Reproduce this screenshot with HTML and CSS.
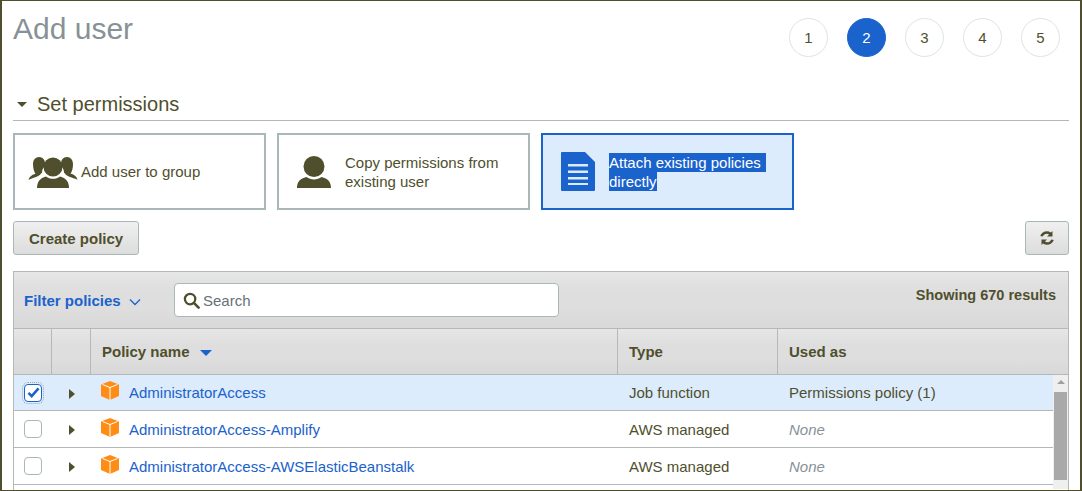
FILE: index.html
```html
<!DOCTYPE html>
<html lang="en">
<head>
    <meta charset="UTF-8">
    <meta name="viewport" content="width=device-width, initial-scale=1.0">
    <title>Add user</title>
    <link rel="stylesheet" href="styles.css">
</head>
<body>
    <div class="page">
        <header class="top">
            <h1>Add user</h1>
            <ol class="steps">
                <li>1</li>
                <li class="current">2</li>
                <li>3</li>
                <li>4</li>
                <li>5</li>
            </ol>
        </header>

        <h2 class="section"><span class="caret-down"></span>Set permissions</h2>

        <div class="cards">
            <div class="card">
                <svg class="icon-group" viewBox="0 0 50 32" width="50" height="32">
                    <path class="dark" d="M11 1c4 0 6 3 6 6.500 0 1.200-.2 2.300-.7 3.300-1.500 1.700-2.300 3.700-2.300 6l-1 .7C11 21 6 21 .5 24c.5-3 3-5 7-6.300C6 16 5 12 5 8c0-4 2.500-7 6-7z"/>
                    <path class="dark" d="M39 1c-4 0-6 3-6 6.500 0 1.200.2 2.300.7 3.300 1.500 1.700 2.300 3.700 2.300 6l1 .7c2 3.500 7 3.500 12.500 6.300-.5-3-3-5-7-6.300C44 16 45 12 45 8c0-4-2.500-7-6-7z"/>
                    <circle class="dark" cx="25" cy="11" r="9.500"/>
                    <path class="dark" d="M9 32c0-6 3-10 9-11.500 2 1.500 4.500 2.300 7 2.300s5-.8 7-2.300C38 22 41 26 41 32z"/>
                </svg>
                <span>Add user to group</span>
            </div>
            <div class="card">
                <svg class="icon-user" viewBox="0 0 34 32" width="34" height="32">
                    <circle class="dark" cx="17" cy="10.500" r="10.500"/>
                    <path class="dark" d="M0 32c0-6 3-9.500 9.500-11 2 1.500 4.800 2.500 7.500 2.500s5.500-1 7.500-2.500C31 22.500 34 26 34 32z"/>
                </svg>
                <span class="card-text">Copy permissions from<br>existing user</span>
            </div>
            <div class="card selected">
                <svg class="icon-doc" viewBox="0 0 34 39" width="34" height="39">
                    <path class="blue" d="M1 0h23l10 10v28a1 1 0 0 1-1 1H1a1 1 0 0 1-1-1V1a1 1 0 0 1 1-1z"/>
                    <path class="doc-lines" d="M7 12h20v2.500H7zM7 18.500h20v2.500H7zM7 25h20v2.500H7zM7 31h20v2H7z"/>
                </svg>
                <span class="card-text">
                    <span class="picked first">Attach existing policies</span>
                    <span class="picked">directly</span>
                </span>
            </div>
        </div>

        <div class="actions">
            <button class="btn" type="button">Create policy</button>
            <button class="btn refresh" type="button" aria-label="Refresh">
                <svg viewBox="0 0 16 16" width="16" height="16">
                    <path class="dark" d="M13.500 1v5.500H8l2.100-2.100C8 3 5 3.700 3.800 6.600L1.200 6C2.800 1.500 8-.2 12 2.500zM2.500 15V9.500H8l-2.100 2.100c2.100 1.400 5.100.7 6.300-2.200l2.600.6c-1.600 4.500-6.800 6.200-10.800 3.500z"/>
                </svg>
            </button>
        </div>

        <section class="policies">
            <div class="filter-bar">
                <div class="filter">Filter policies
                    <svg viewBox="0 0 12 8" width="12" height="8"><path d="M1 1.500l5 5 5-5" fill="none" stroke="#1a62cc" stroke-width="1.300"/></svg>
                </div>
                <div class="search">
                    <svg viewBox="0 0 18 18" width="17" height="17"><circle cx="7.500" cy="7.500" r="5.500" fill="none" stroke="#4f4f2d" stroke-width="2.400"/><path d="M11.500 11.500l5 5" stroke="#4f4f2d" stroke-width="2.800" stroke-linecap="round"/></svg>
                    <span>Search</span>
                </div>
                <div class="count">Showing 670 results</div>
            </div>

            <div class="head-row">
                <div class="head-cell"></div>
                <div class="head-cell"></div>
                <div class="head-cell">Policy name <span class="sort"></span></div>
                <div class="head-cell">Type</div>
                <div class="head-cell">Used as</div>
            </div>

            <div class="table-body">
                <div class="rows">
                    <div class="row active">
                        <div class="cell-check"><span class="check on">
                            <svg viewBox="0 0 14 12" width="13" height="11"><path d="M1.500 6.500l3.500 3.500 7.500-8.500" fill="none" stroke="#1a62cc" stroke-width="2.800"/></svg>
                        </span></div>
                        <div class="cell-arrow"><span class="caret-right"></span></div>
                        <div class="cell-name">
                            <svg class="cube" viewBox="0 0 18 19" width="18" height="19"><path d="M0 3.500L9 0l9 3.500V15l-9 4-9-4z" fill="#ff8c14"/><path d="M1.500 3.500L9 6.500l7.500-3M9 6.500V19" fill="none" stroke="#fff" stroke-width="1"/></svg>
                            <a>AdministratorAccess</a>
                        </div>
                        <div class="cell">Job function</div>
                        <div class="cell">Permissions policy (1)</div>
                    </div>
                    <div class="row">
                        <div class="cell-check"><span class="check"></span></div>
                        <div class="cell-arrow"><span class="caret-right"></span></div>
                        <div class="cell-name">
                            <svg class="cube" viewBox="0 0 18 19" width="18" height="19"><path d="M0 3.500L9 0l9 3.500V15l-9 4-9-4z" fill="#ff8c14"/><path d="M1.500 3.500L9 6.500l7.500-3M9 6.500V19" fill="none" stroke="#fff" stroke-width="1"/></svg>
                            <a>AdministratorAccess-Amplify</a>
                        </div>
                        <div class="cell">AWS managed</div>
                        <div class="cell none">None</div>
                    </div>
                    <div class="row">
                        <div class="cell-check"><span class="check"></span></div>
                        <div class="cell-arrow"><span class="caret-right"></span></div>
                        <div class="cell-name">
                            <svg class="cube" viewBox="0 0 18 19" width="18" height="19"><path d="M0 3.500L9 0l9 3.500V15l-9 4-9-4z" fill="#ff8c14"/><path d="M1.500 3.500L9 6.500l7.500-3M9 6.500V19" fill="none" stroke="#fff" stroke-width="1"/></svg>
                            <a>AdministratorAccess-AWSElasticBeanstalk</a>
                        </div>
                        <div class="cell">AWS managed</div>
                        <div class="cell none">None</div>
                    </div>
                </div>
                <div class="scrollbar">
                    <span class="scroll-up"></span>
                    <span class="scroll-thumb"></span>
                </div>
            </div>
        </section>
    </div>
</body>
</html>
```

FILE: styles.css
```css
* {
    margin: 0;
    padding: 0;
    box-sizing: border-box;
    font-family: 'Liberation Sans', Arial, sans-serif;
}

html, body {
    height: 491px;
    overflow: hidden;
    background-color: #fff;
}

.page {
    height: 491px;
    border: 1px solid #4f4f2d;
    border-left-width: 2px;
    border-right-width: 2px;
    padding: 0 11px 0 11px;
    color: #4f4f2d;
}

.dark { fill: #4f4f2d; }
.blue { fill: #1a62cc; }
.doc-lines { fill: #dcebfb; }

/* top */
.top {
    display: flex;
    justify-content: space-between;
    height: 86px;
}

.top h1 {
    font-size: 30px;
    font-weight: 400;
    line-height: 34px;
    margin-top: 11px;
    color: #879196;
}

.steps {
    display: flex;
    gap: 19px;
    list-style: none;
    margin-top: 17px;
    margin-right: 9px;
}

.steps li {
    width: 39px;
    height: 39px;
    display: flex;
    align-items: center;
    justify-content: center;
    border: 1px solid #dfe3e6;
    border-radius: 50%;
    font-size: 15px;
}

.steps .current {
    background-color: #1a62cc;
    border-color: #1a62cc;
    color: #fff;
}

/* section title */
.section {
    display: flex;
    align-items: center;
    height: 34px;
    font-size: 20px;
    font-weight: 400;
    line-height: 30px;
    border-bottom: 1px solid #b5b8b8;
}

.caret-down {
    width: 0;
    height: 0;
    border-left: 5px solid transparent;
    border-right: 5px solid transparent;
    border-top: 5px solid #4f4f2d;
    margin: 2px 10px 0 4px;
}

/* cards */
.cards {
    display: flex;
    gap: 11px;
    margin-top: 12px;
}

.card {
    width: 253px;
    height: 77px;
    display: flex;
    align-items: center;
    border: 2px solid #aab7b8;
    font-size: 15px;
    line-height: 19px;
}

.icon-group { margin: 0 3px 0 13px; flex: none; }
.icon-user { margin: 0 14px 0 18px; flex: none; }
.icon-doc { margin: 0 14px 0 18px; flex: none; }

.card.selected {
    border-color: #1a62cc;
    background-color: #dcecfd;
}

.picked {
    display: block;
    width: fit-content;
    background-color: #1a62cc;
    color: #fff;
}

.picked.first { padding-right: 5px; }

/* buttons */
.actions {
    display: flex;
    justify-content: space-between;
    margin-top: 11px;
}

.btn {
    height: 34px;
    padding: 0 15px;
    border: 1px solid #aab7b8;
    border-radius: 3px;
    background: linear-gradient(#f0f0f0, #dcdcdc);
    color: #4f4f2d;
    font-size: 15px;
    font-weight: 700;
}

.refresh {
    width: 44px;
    padding: 0;
    display: flex;
    align-items: center;
    justify-content: center;
}

/* table */
.policies {
    margin-top: 16px;
    border-top: 1px solid #b5b8b8;
    border-left: 1px solid #b5b8b8;
    border-right: 1px solid #b5b8b8;
}

.filter-bar {
    height: 57px;
    display: flex;
    background: linear-gradient(#e6e6e6, #dedede 35%, #dedede 65%, #d8d8d8);
    border-bottom: 1px solid #b5b8b8;
}

.filter {
    width: 160px;
    padding: 20px 0 0 10px;
    color: #1a62cc;
    font-size: 15px;
    font-weight: 700;
    line-height: 17px;
    white-space: nowrap;
}

.filter svg { margin-left: 4px; }

.search {
    width: 385px;
    height: 34px;
    margin-top: 11px;
    display: flex;
    align-items: center;
    gap: 3px;
    padding-left: 8px;
    background-color: #fff;
    border: 1px solid #aab7b8;
    border-radius: 4px;
    color: #687078;
    font-size: 15px;
}

.count {
    margin-left: auto;
    padding: 15px 12px 0 0;
    font-size: 14.500px;
    font-weight: 700;
    line-height: 17px;
}

.head-row {
    height: 46px;
    display: grid;
    grid-template-columns: 38px 39px 527px 160px 1fr;
    background: linear-gradient(#e6e6e6, #dedede 35%, #dedede 65%, #d8d8d8);
    border-bottom: 1px solid #b5b8b8;
}

.head-cell {
    padding: 14px 0 0 11px;
    border-right: 1px solid #b5b8b8;
    font-size: 15px;
    font-weight: 700;
    line-height: 17px;
}

.head-cell:last-child { border-right: 0; }

.sort {
    display: inline-block;
    width: 0;
    height: 0;
    margin-left: 6px;
    vertical-align: 1px;
    border-left: 6px solid transparent;
    border-right: 6px solid transparent;
    border-top: 6px solid #1a62cc;
}

.table-body {
    display: flex;
    height: 115px;
}

.rows { flex: 1; }

.row {
    height: 37px;
    display: grid;
    grid-template-columns: 38px 39px 527px 160px 1fr;
    align-items: center;
    border-bottom: 1px solid #b5b8b8;
    font-size: 15px;
}

.row.active { background-color: #dcecfd; height: 36px; }

.cell-check { padding-left: 10px; display: flex; }

.check {
    width: 18px;
    height: 18px;
    display: flex;
    align-items: center;
    justify-content: center;
    border: 1px solid #aab7b8;
    border-radius: 4px;
    background-color: #fff;
}

.check.on {
    border-color: #1a62cc;
    outline: 1px dotted #9aa7b5;
    outline-offset: 1px;
}

.cell-arrow { padding-left: 17px; display: flex; padding-top: 2px; }

.caret-right {
    width: 0;
    height: 0;
    border-top: 5px solid transparent;
    border-bottom: 5px solid transparent;
    border-left: 6px solid #4f4f2d;
}

.cell-name {
    display: flex;
    align-items: center;
    padding-left: 10px;
    gap: 10px;
}

.cube { margin-top: -4px; flex: none; }

.cell-name a {
    color: #1a62cc;
    font-size: 15px;
}

.cell { padding-left: 11px; }

.cell.none {
    font-style: italic;
    color: #879196;
}

.scrollbar {
    width: 15px;
    height: 114px;
    display: flex;
    flex-direction: column;
    align-items: center;
    background-color: #efefef;
}

.scroll-up {
    height: 17px;
    width: 0;
    margin-top: 5px;
    border-left: 4px solid transparent;
    border-right: 4px solid transparent;
    border-bottom: 4px solid #a0a0a0;
    height: 0;
    margin-bottom: 8px;
}

.scroll-thumb {
    width: 13px;
    height: 88px;
    background-color: #a9a9a9;
}
```
